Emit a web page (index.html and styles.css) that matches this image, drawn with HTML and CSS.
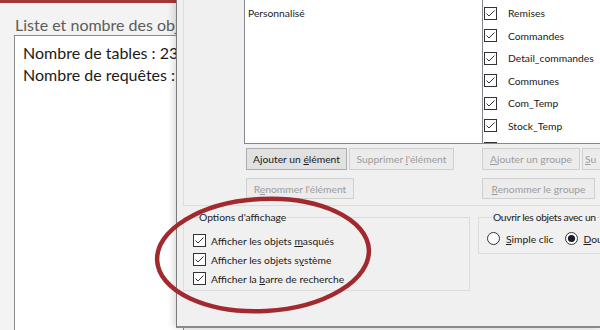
FILE: index.html
```html
<!DOCTYPE html>
<html lang="fr">
<head>
<meta charset="utf-8">
<title>Options de navigation</title>
<link rel="stylesheet" href="styles.css">
</head>
<body>
<div class="app">
  <div class="app-bar"></div>
  <div class="app-title">Liste et nombre des objets</div>
  <div class="app-box">
    <p>Nombre de tables : 23</p>
    <p>Nombre de requêtes : 12</p>
  </div>
</div>

<div class="dialog">
  <div class="nav">
    <div class="list cats"><div class="item">Personnalisé</div></div>
    <div class="list groups">
      <div class="row"><svg class="cb" viewBox="0 0 13 13"><rect x="0.5" y="0.5" width="12" height="12" fill="#fff" stroke="#333"/><path d="M2.5 6.5l2.5 2.5 5.5-5.5" fill="none" stroke="#333"/></svg><span>Remises</span></div>
      <div class="row"><svg class="cb" viewBox="0 0 13 13"><rect x="0.5" y="0.5" width="12" height="12" fill="#fff" stroke="#333"/><path d="M2.5 6.5l2.5 2.5 5.5-5.5" fill="none" stroke="#333"/></svg><span>Commandes</span></div>
      <div class="row"><svg class="cb" viewBox="0 0 13 13"><rect x="0.5" y="0.5" width="12" height="12" fill="#fff" stroke="#333"/><path d="M2.5 6.5l2.5 2.5 5.5-5.5" fill="none" stroke="#333"/></svg><span>Detail_commandes</span></div>
      <div class="row"><svg class="cb" viewBox="0 0 13 13"><rect x="0.5" y="0.5" width="12" height="12" fill="#fff" stroke="#333"/><path d="M2.5 6.5l2.5 2.5 5.5-5.5" fill="none" stroke="#333"/></svg><span>Communes</span></div>
      <div class="row"><svg class="cb" viewBox="0 0 13 13"><rect x="0.5" y="0.5" width="12" height="12" fill="#fff" stroke="#333"/><path d="M2.5 6.5l2.5 2.5 5.5-5.5" fill="none" stroke="#333"/></svg><span>Com_Temp</span></div>
      <div class="row"><svg class="cb" viewBox="0 0 13 13"><rect x="0.5" y="0.5" width="12" height="12" fill="#fff" stroke="#333"/><path d="M2.5 6.5l2.5 2.5 5.5-5.5" fill="none" stroke="#333"/></svg><span>Stock_Temp</span></div>
      <div class="row"><svg class="cb" viewBox="0 0 13 13"><rect x="0.5" y="0.5" width="12" height="12" fill="#fff" stroke="#333"/><path d="M2.5 6.5l2.5 2.5 5.5-5.5" fill="none" stroke="#333"/></svg><span>Produits</span></div>
    </div>

    <div class="btns left first">
      <div class="btn w101"><span>Ajouter un <u>é</u>lément</span></div>
      <div class="btn off w105"><span>Supprimer <u>l</u>'élément</span></div>
    </div>
    <div class="btns first">
      <div class="btn off w98"><span><u>A</u>jouter un groupe</span></div>
      <div class="btn off su"><span><u>S</u>u</span></div>
    </div>
    <div class="btns left second">
      <div class="btn off w108 short"><span>R<u>e</u>nommer l'élément</span></div>
    </div>
    <div class="btns second">
      <div class="btn off w113 short"><span><u>R</u>enommer le groupe</span></div>
    </div>
  </div>

  <div class="bottom">
    <fieldset class="grp options">
      <legend>Options d'affichage</legend>
      <div class="opt"><svg class="cb" viewBox="0 0 13 13"><rect x="0.5" y="0.5" width="12" height="12" fill="#fff" stroke="#333"/><path d="M2.5 6.5l2.5 2.5 5.5-5.5" fill="none" stroke="#333"/></svg><span>Afficher les objets <u>m</u>asqués</span></div>
      <div class="opt"><svg class="cb" viewBox="0 0 13 13"><rect x="0.5" y="0.5" width="12" height="12" fill="#fff" stroke="#333"/><path d="M2.5 6.5l2.5 2.5 5.5-5.5" fill="none" stroke="#333"/></svg><span>Afficher les objets s<u>y</u>stème</span></div>
      <div class="opt"><svg class="cb" viewBox="0 0 13 13"><rect x="0.5" y="0.5" width="12" height="12" fill="#fff" stroke="#333"/><path d="M2.5 6.5l2.5 2.5 5.5-5.5" fill="none" stroke="#333"/></svg><span>Afficher la <u>b</u>arre de recherche</span></div>
    </fieldset>
    <fieldset class="grp open">
      <legend>Ouvrir les objets avec un</legend>
      <div class="radios">
        <div class="radio"><svg class="rd" viewBox="0 0 13 13"><circle cx="6.5" cy="6.5" r="6" fill="#fff" stroke="#333"/></svg><span><u>S</u>imple clic</span></div>
        <div class="radio"><svg class="rd" viewBox="0 0 13 13"><circle cx="6.5" cy="6.5" r="6" fill="#fff" stroke="#333"/><circle cx="6.5" cy="6.5" r="3.6" fill="#1c1b2b"/></svg><span><u>D</u>ou</span></div>
      </div>
    </fieldset>
  </div>
</div>

<svg class="ring" width="600" height="330" viewBox="0 0 600 330">
  <ellipse cx="263" cy="255" rx="106" ry="56" transform="rotate(-3 263 255)" fill="none" stroke="#a2292e" stroke-width="4.5"/>
</svg>
</body>
</html>
```

FILE: styles.css
```css
* { box-sizing: border-box; }
html, body { margin: 0; padding: 0; }
body {
  width: 600px;
  height: 330px;
  overflow: hidden;
  position: relative;
  background: #f3f3f3;
  font-family: "Lato", "Liberation Sans", sans-serif;
}

/* Access window behind the dialog */
.app { position: absolute; left: 0; top: 0; width: 600px; height: 330px; }
.app-bar { height: 3px; background: #a4373a; }
.app-title {
  margin: 12px 0 0 15px;
  width: 162px;
  overflow: hidden;
  font-size: 16px;
  line-height: 20px;
  color: #5c5c5c;
  white-space: nowrap;
}
.app-box {
  margin-left: 14px;
  width: 170px;
  height: 300px;
  overflow: hidden;
  background: #fff;
  border: 1px solid #8c8c8c;
  padding: 6px 0 0 8px;
  font-size: 16px;
  line-height: 21.5px;
  color: #1b1b1b;
  white-space: nowrap;
}
.app-box p { margin: 0; }

/* Dialog window */
.dialog {
  position: absolute;
  left: 176px;
  top: -24px;
  width: 424px;
  height: 352px;
  overflow: hidden;
  background: #f0f0f0;
  border-left: 1px solid #7a7a7a;
  border-bottom: 2px solid #8a8a8a;
  box-shadow: -3px 0 6px rgba(0, 0, 0, 0.13);
  font-size: 10.3px;
  color: #1a1a1a;
}

.nav {
  margin-left: 6px;
  border: 1px solid #dcdcdc;
  border-top: none;
  border-right: none;
  padding: 0 0 6px 60px;
  display: grid;
  grid-template-columns: 238px 1fr;
}
.list {
  height: 168px;
  background: #fff;
  border-left: 1px solid #828790;
  border-bottom: 1px solid #828790;
  overflow: hidden;
}
.cats { padding: 30px 0 0 3px; }
.item { line-height: 15px; }
.groups { padding: 26px 0 0 1px; }
.row {
  height: 22.5px;
  display: flex;
  align-items: center;
  gap: 11px;
  white-space: nowrap;
}
.cb, .rd { width: 13px; height: 13px; flex: none; display: block; }

.btns { display: flex; gap: 2px; white-space: nowrap; overflow: hidden; }
.btns.left { padding-left: 2px; }
.btns.first { margin-top: 4px; }
.btns.second { margin-top: 8px; }
.btn {
  height: 22px;
  border: 1px solid #adadad;
  background: #e1e1e1;
  display: flex;
  align-items: center;
  justify-content: center;
  flex: none;
  color: #1a1a1a;
}
.btn.short { height: 21px; }
.btn.off { background: #ececec; border-color: #cfcfcf; color: #9c9c9c; }
.btn.su { width: 60px; justify-content: flex-start; padding-left: 2px; }
.w98 { width: 98px; }
.w101 { width: 101px; }
.w105 { width: 105px; }
.w108 { width: 108px; }
.w113 { width: 113px; }

/* Bottom groups */
.bottom {
  display: flex;
  align-items: flex-start;
  gap: 8px;
  margin: 4px 0 0 6px;
}
.grp {
  margin: 0;
  border: 1px solid #dcdcdc;
  min-width: 0;
}
.grp legend {
  margin-left: 5px;
  padding: 0 1px;
  line-height: 15px;
  white-space: nowrap;
}
.open legend { letter-spacing: -0.35px; }
.options { width: 287px; padding: 6px 0 2px 9px; }
.open { flex: 1; border-right: none; padding: 4px 0 5px 8px; }
.opt {
  height: 19px;
  display: flex;
  align-items: center;
  gap: 5px;
  white-space: nowrap;
}
.radios { display: flex; gap: 11px; white-space: nowrap; }
.radio { height: 19px; display: flex; align-items: center; gap: 6px; }

.ring { position: absolute; left: 0; top: 0; pointer-events: none; }
```
